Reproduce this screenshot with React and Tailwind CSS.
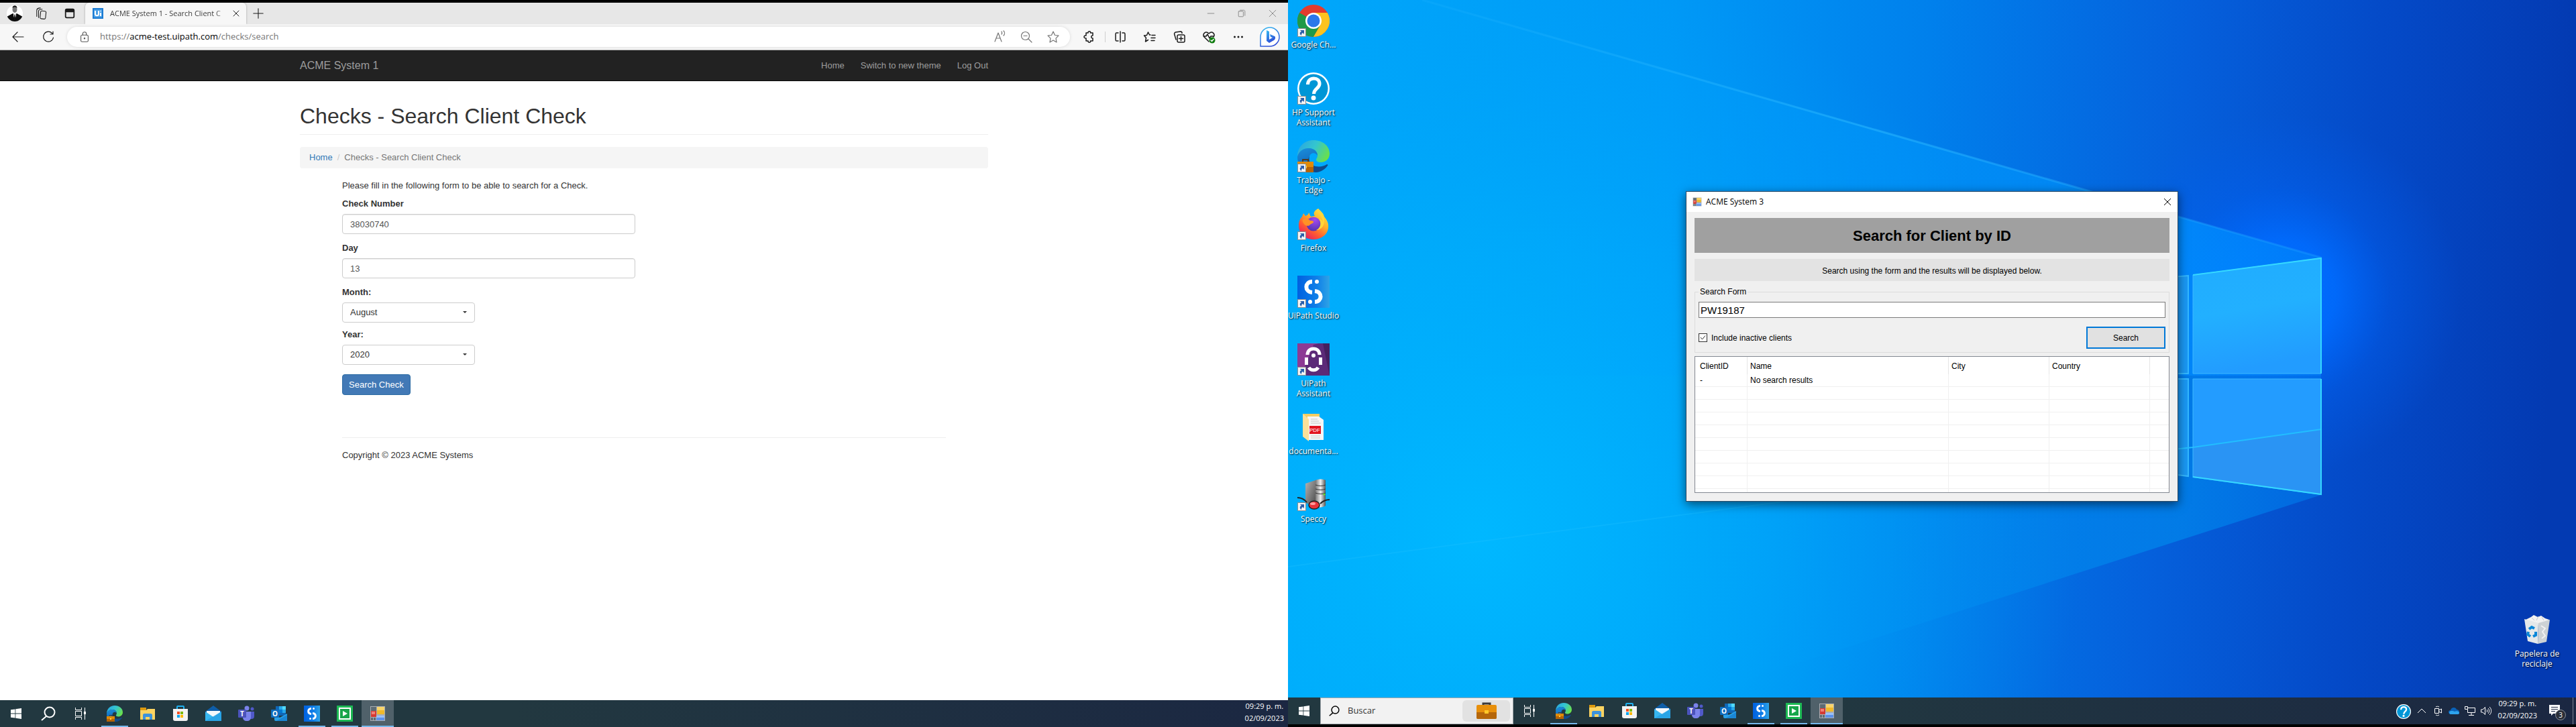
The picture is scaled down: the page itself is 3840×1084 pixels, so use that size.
import React from "react";

const SEGOE = "font-['Open_Sans','Noto_Sans',sans-serif]";
const ARIAL = "font-['Liberation_Sans',Arial,sans-serif]";

/* ---------- application icons ---------- */

function EdgeSwirl({ id }) {
  return (
    <>
      <defs>
        <linearGradient id={id + "a"} x1="0" y1="0.2" x2="1" y2="0.6">
          <stop offset="0" stopColor="#2aa6e0" />
          <stop offset="0.5" stopColor="#34c6cf" />
          <stop offset="1" stopColor="#6ae04a" />
        </linearGradient>
        <linearGradient id={id + "b"} x1="0" y1="0" x2="0.3" y2="1">
          <stop offset="0" stopColor="#1b8fdc" />
          <stop offset="1" stopColor="#0f5fb4" />
        </linearGradient>
      </defs>
      <path d="M0 25C0 10 10 0 24 0c14 0 24 9 24 20 0 8-6 13-13 13-5 0-7-2-7-4 0-2 2-3 2-6 0-6-5-11-13-11C9 12 2 17 0 25z" fill={`url(#${id}a)`} />
      <path d="M0 25c2-9 9-13 17-13 8 0 13 5 13 11-3-5-10-5-12 1-3 10 4 20 14 23-3 1-5 1-8 1C10 48 0 38 0 25z" fill={`url(#${id}b)`} />
      <path d="M18 24c-2 7 2 13 9 15 7 1 12 0 17-3 1 0 2 1 1 2-4 6-11 10-18 10C18 45 12 33 18 24z" fill="#114a8b" />
    </>
  );
}

function EdgeWork({ id, className }) {
  return (
    <svg viewBox="0 0 48 48" className={className} aria-hidden="true">
      <EdgeSwirl id={id} />
      <path d="M8 32v-3h8v3" fill="none" stroke="#4a3a2a" strokeWidth="2" />
      <rect x="0" y="32" width="24" height="16" fill="#e08a06" />
      <rect x="0" y="40" width="24" height="8" fill="#b56305" />
      <rect x="10" y="38" width="4" height="4" fill="#ffd24d" />
    </svg>
  );
}

function UiStudio({ id, className }) {
  return (
    <svg viewBox="0 0 48 48" className={className} aria-hidden="true">
      <defs>
        <linearGradient id={id} x1="0" y1="0" x2="1" y2="0">
          <stop offset="0" stopColor="#0060e0" />
          <stop offset="0.6" stopColor="#0f7fe8" />
          <stop offset="1" stopColor="#2ea3e6" />
        </linearGradient>
      </defs>
      <rect width="48" height="48" fill={`url(#${id})`} />
      <path d="M22 9C11 9 10 24 22 25" fill="none" stroke="#fff" strokeWidth="6" />
      <path d="M26 23C38 24 37 39 26 39" fill="none" stroke="#fff" strokeWidth="6" />
      <circle cx="29" cy="9" r="3" fill="#fff" />
      <circle cx="19" cy="39" r="3" fill="#fff" />
    </svg>
  );
}

function UiAssistant({ className }) {
  return (
    <svg viewBox="0 0 48 48" className={className} aria-hidden="true">
      <rect width="48" height="48" fill="#8d3a94" />
      <path d="M24 2L6 48h42V22L40 0h-8z" fill="#5c2a78" />
      <path d="M38 0h10v48z" fill="#44205f" />
      <path d="M15 17c0-6 4-9 9-9s9 3 9 9" fill="none" stroke="#fff" strokeWidth="5" />
      <path d="M13.500 21v11M34.500 21v11" fill="none" stroke="#fff" strokeWidth="5" />
      <path d="M17 36c3 5 11 5 14 0" fill="none" stroke="#fff" strokeWidth="5" />
      <circle cx="24" cy="18" r="3" fill="#fff" />
    </svg>
  );
}

function ChromeIcon({ className }) {
  return (
    <svg viewBox="0 0 48 48" className={className} aria-hidden="true">
      <circle cx="24" cy="24" r="24" fill="#e33b2e" />
      <path d="M24 24L3.200 12A24 24 0 0 0 24 48l10.400-18z" fill="#1f9a48" />
      <path d="M24 12h20.800A24 24 0 0 1 24 48l10.400-18z" fill="#fcc31e" />
      <circle cx="24" cy="24" r="12" fill="#fff" />
      <circle cx="24" cy="24" r="9.500" fill="#2b78ea" />
    </svg>
  );
}

function HpIcon({ className }) {
  return (
    <svg viewBox="0 0 48 48" className={className} aria-hidden="true">
      <circle cx="24" cy="24" r="24" fill="#fff" />
      <circle cx="24" cy="24" r="21.500" fill="#0096d6" />
      <path d="M15.500 18c0-6 4-9 9-9s8.500 3 8.500 8c0 7-8.500 7-8.500 15" fill="none" stroke="#fff" strokeWidth="5" />
      <circle cx="24" cy="38" r="3.500" fill="#fff" />
    </svg>
  );
}

function FirefoxIcon({ className }) {
  return (
    <svg viewBox="0 0 48 48" className={className} aria-hidden="true">
      <defs>
        <linearGradient id="ffx" x1="0.9" y1="0" x2="0.2" y2="1">
          <stop offset="0" stopColor="#fff24a" />
          <stop offset="0.4" stopColor="#ffb02a" />
          <stop offset="0.7" stopColor="#ff5a32" />
          <stop offset="1" stopColor="#e4156a" />
        </linearGradient>
        <radialGradient id="ffg" cx="0.6" cy="0.2" r="0.9">
          <stop offset="0" stopColor="#a54af0" />
          <stop offset="1" stopColor="#4a30a8" />
        </radialGradient>
      </defs>
      <path d="M31 1c4 4 8 7 9 12 4 5 7 10 6 17-1 10-11 17-22 17C11 47 2 38 2 26c0-6 2-10 5-13l2-5 3 4c3-1 5-3 5-5 2 2 1 5 4 6 2-1 3-1 5-1-3-4-1-8 5-11z" fill="url(#ffx)" />
      <circle cx="24" cy="24" r="10.500" fill="url(#ffg)" />
      <path d="M8 17c4-2 9-1 11 2 2 0 5 0 5 2 0 2-3 2-5 4-2 3-7 2-9-1-2-2-3-5-2-7z" fill="#ff9226" />
      <path d="M31 1c-1 6 7 12 7 20-1-2-3-4-5-4 3 5 2 13-5 16 8 0 13-7 12-16 0-6-6-9-9-16z" fill="#ffd63a" />
    </svg>
  );
}

function DocFolder({ className }) {
  return (
    <svg viewBox="0 0 48 48" className={className} aria-hidden="true">
      <path d="M8 4h25v8H8z" fill="#f3cd62" />
      <path d="M15 8h17l7 5v30H15z" fill="#f6f6f6" />
      <path d="M20 12h10M20 15h12M20 18h15M20 37h14M20 40h14" stroke="#c8c8c8" />
      <path d="M8 4l9 8v33l-9-7z" fill="#fbe09a" />
      <rect x="18" y="22" width="17" height="12" fill="#e2131f" />
      <text x="26" y="31" fontSize="8" textAnchor="middle" fill="#fff" fontFamily="Liberation Sans, sans-serif">PDF</text>
    </svg>
  );
}

function SpeccyIcon({ className }) {
  return (
    <svg viewBox="0 0 48 48" className={className} aria-hidden="true">
      <defs>
        <linearGradient id="spc" x1="0" x2="1" y1="0" y2="0">
          <stop offset="0" stopColor="#777" />
          <stop offset="0.5" stopColor="#eee" />
          <stop offset="1" stopColor="#555" />
        </linearGradient>
        <linearGradient id="spl" x1="0" x2="1" y1="0" y2="1">
          <stop offset="0" stopColor="#b4b4b4" />
          <stop offset="1" stopColor="#4c4c4c" />
        </linearGradient>
      </defs>
      <path d="M12 7l15-5v38l-15-4z" fill="url(#spl)" />
      <path d="M27 2c5-2 11-2 15 0v38c-4 3-10 3-15 1z" fill="url(#spc)" />
      <path d="M27 9c5 2 11 2 15 0M27 15c5 2 11 2 15 0M27 21c5 2 11 2 15 0" stroke="#333" fill="none" strokeWidth="1" />
      <circle cx="40" cy="23" r="1.500" fill="#5ee02c" />
      <path d="M0 28c6 0 10 2 14 7M48 31c-6 0-10 2-14 6" stroke="#222" strokeWidth="2" fill="none" />
      <ellipse cx="25" cy="39" rx="8" ry="6" fill="#e8333a" stroke="#222" strokeWidth="1.500" />
      <ellipse cx="23" cy="37" rx="4" ry="2" fill="#ff9a9a" />
    </svg>
  );
}

function RecycleBin({ className }) {
  return (
    <svg viewBox="0 0 48 48" className={className} aria-hidden="true">
      <path d="M7 9l8-4 4-3 6 3 5-2 6 4 6 2-3 5-18 3z" fill="#f2f2f2" />
      <path d="M16 6l4 4M26 4l-3 6M31 5l3 5" stroke="#c5c9cc" />
      <path d="M5 8l21 6-1 31-15-4z" fill="#e4e8ea" />
      <path d="M26 14l17-5-5 33-13 3z" fill="#cdd2d5" />
      <path d="M30 18l6 4-4 5 4 6-5 4" fill="none" stroke="#f2f2f2" strokeWidth="2" />
      <path d="M12 23l4-3 4 2M22 27l0 5-4 2M14 34l-4-3 1-4" stroke="#0a86d8" strokeWidth="4" fill="none" />
    </svg>
  );
}

function FormsIcon({ className }) {
  return (
    <svg viewBox="0 0 24 24" className={className} aria-hidden="true">
      <path d="M1 1h22v22H1z" fill="#a9adb2" />
      <path d="M2 2h8v6H2zM2 18h3v4H2zM6 18h3v4H6z" fill="#5d6b73" />
      <rect x="11" y="2" width="11" height="11" fill="#f0b92a" />
      <path d="M11 2h11v5H11z" fill="#f8d469" />
      <rect x="2" y="8" width="8" height="9" fill="#d43a32" />
      <path d="M3 9h5v4H3z" fill="#ee8077" />
      <rect x="10" y="15" width="12" height="7" fill="#5b91ea" />
      <path d="M10 15h12v3H10z" fill="#9bc0f8" />
    </svg>
  );
}

function ExplorerIcon() {
  return (
    <svg viewBox="0 0 24 24" className="size-6" aria-hidden="true">
      <path d="M1 3h9v5H1z" fill="#dd9a0e" />
      <path d="M1 7h9l2-2h11v16H1z" fill="#fcd462" />
      <path d="M5 21v-7c0-1 1-2 2-2h10c1 0 2 1 2 2v7h-4v-4H9v4z" fill="#3d93dc" />
    </svg>
  );
}

function StoreIcon() {
  return (
    <svg viewBox="0 0 24 24" className="size-6" aria-hidden="true">
      <path d="M7 6V2c0-1 0-1 1-1h8c1 0 1 0 1 1v4" fill="none" stroke="#20b2f0" strokeWidth="2" />
      <path d="M1 5h22v15c0 2-1 3-3 3H4c-2 0-3-1-3-3z" fill="#f3f3f3" />
      <path d="M7 9h4v4H7z" fill="#f25022" />
      <path d="M12 9h4v4h-4z" fill="#7fba00" />
      <path d="M7 14h4v4H7z" fill="#00a4ef" />
      <path d="M12 14h4v4h-4z" fill="#ffb900" />
    </svg>
  );
}

function MailIcon() {
  return (
    <svg viewBox="0 0 24 24" className="size-6" aria-hidden="true">
      <path d="M0 9l12-9 12 9v3H0z" fill="#0f5ea8" />
      <path d="M2 8h20v9H2z" fill="#f4f8fb" />
      <path d="M0 9l12 8 12-8v14H0z" fill="#37b6f0" />
      <path d="M24 9v14H0z" fill="#1f97e0" opacity="0.6" />
    </svg>
  );
}

function TeamsIcon() {
  return (
    <svg viewBox="0 0 24 24" className="size-6" aria-hidden="true">
      <circle cx="13" cy="4" r="3.500" fill="#7b83eb" />
      <circle cx="21" cy="5" r="2.500" fill="#5059c9" />
      <path d="M17 9h7v7c0 3-2 4-4 4h-3z" fill="#5059c9" />
      <path d="M7 9h12v8c0 4-2 6-6 6s-6-2-6-6z" fill="#7b83eb" />
      <rect x="0" y="6" width="12" height="12" rx="1" fill="#4b53bc" />
      <text x="6" y="16" fontSize="10" fontWeight="bold" textAnchor="middle" fill="#fff" fontFamily="Open Sans, sans-serif">T</text>
    </svg>
  );
}

function OutlookIcon() {
  return (
    <svg viewBox="0 0 24 24" className="size-6" aria-hidden="true">
      <rect x="7" y="1" width="15" height="14" fill="#1066b5" />
      <path d="M12 1h5v5h-5z" fill="#28a8ea" />
      <path d="M17 1h5v5h-5z" fill="#50d9ff" />
      <path d="M12 6h5v5h-5z" fill="#0078d4" />
      <path d="M17 6h5v5h-5z" fill="#28a8ea" />
      <path d="M5 14l8 4 11-6v11H7c-1 0-2-1-2-2z" fill="#2aa0e6" />
      <path d="M24 23H8l16-9z" fill="#1a86d4" />
      <rect x="0" y="6" width="12" height="12" rx="1" fill="#0f6cbd" />
      <text x="6" y="16" fontSize="10" fontWeight="bold" textAnchor="middle" fill="#fff" fontFamily="Open Sans, sans-serif">O</text>
    </svg>
  );
}

function RobotIcon() {
  return (
    <svg viewBox="0 0 24 24" className="size-6" aria-hidden="true">
      <rect width="24" height="24" fill="#1db954" />
      <path d="M4 4h16v16H4z" fill="#17a54a" stroke="#fff" strokeWidth="2" />
      <path d="M9 8l7 4-7 4z" fill="#fff" />
    </svg>
  );
}

function TaskViewIcon() {
  return (
    <svg viewBox="0 0 18 18" className="size-[18px]" fill="none" stroke="#fff" aria-hidden="true">
      <path d="M1.500 0v3.500h9V0M1.500 18v-3.500h9V18M1.500 5.500h9v7h-9zM15.500 0v18" />
      <path d="M14 6h3v4h-3z" fill="#fff" stroke="none" />
    </svg>
  );
}

function StartIcon() {
  return (
    <svg viewBox="0 0 16 16" className="size-4" fill="#fff" aria-hidden="true">
      <path d="M0 2.300l6.500-.9v6.200H0zM7.300 1.300L16 0v7.600H7.300zM0 8.400h6.500v6.200L0 13.700zM7.300 8.400H16V16l-8.700-1.200z" />
    </svg>
  );
}

function Magnifier({ className }) {
  return (
    <svg viewBox="0 0 22 22" className={className} fill="none" stroke="currentColor" strokeWidth="2" aria-hidden="true">
      <circle cx="13" cy="9" r="7.500" />
      <path d="M8 15l-7 6" />
    </svg>
  );
}

function Briefcase() {
  return (
    <svg viewBox="0 0 32 26" className="h-[26px] w-8" aria-hidden="true">
      <path d="M11 5V2h10v3" fill="none" stroke="#3d3a3a" strokeWidth="3" />
      <rect x="1" y="4" width="30" height="21" rx="2" fill="#e8900c" />
      <path d="M1 15h30v8c0 1-1 2-2 2H3c-1 0-2-1-2-2z" fill="#b5660a" />
      <rect x="13" y="12" width="6" height="5" fill="#ffc928" />
    </svg>
  );
}

/* ---------- taskbar ---------- */

function TaskButton({ label, running, active, children }) {
  return (
    <button
      type="button"
      aria-label={label}
      className={
        "flex h-10 w-12 flex-col items-center " + (active ? "bg-[#50616a]" : "")
      }
    >
      <span className="flex h-[38px] items-center pt-0.5">{children}</span>
      <span className={"h-0.5 " + (active ? "w-full " : "w-10 ") + (running ? "bg-[#76b9ed]" : "")} />
    </button>
  );
}

function PinnedApps({ id }) {
  return (
    <div className="ml-[3px] flex gap-px">
      <TaskButton label="Edge" running><EdgeWork id={id + "e"} className="size-6" /></TaskButton>
      <TaskButton label="Explorador de archivos"><ExplorerIcon /></TaskButton>
      <TaskButton label="Microsoft Store"><StoreIcon /></TaskButton>
      <TaskButton label="Correo"><MailIcon /></TaskButton>
      <TaskButton label="Teams"><TeamsIcon /></TaskButton>
      <TaskButton label="Outlook"><OutlookIcon /></TaskButton>
      <TaskButton label="UiPath Studio" running><UiStudio id={id + "u"} className="size-6" /></TaskButton>
      <TaskButton label="UiPath Robot" running><RobotIcon /></TaskButton>
      <TaskButton label="ACME System 3" running active><FormsIcon className="size-6" /></TaskButton>
    </div>
  );
}

function Clock() {
  return (
    <div className="text-center text-[11px] leading-[18px] whitespace-nowrap text-white">
      <div>09:29 p. m.</div>
      <div>02/09/2023</div>
    </div>
  );
}

const BAR = "flex h-10 shrink-0 items-stretch bg-linear-to-r from-[#223840] from-40% to-[#1b2742] ";

/* ---------- browser ---------- */

function Stroke({ className, children, w = 20 }) {
  return (
    <svg viewBox="0 0 20 20" width={w} height={w} className={className} fill="none" stroke="currentColor" strokeWidth="1.200" strokeLinejoin="round" strokeLinecap="round" aria-hidden="true">
      {children}
    </svg>
  );
}

function ToolButton({ label, children, className = "w-11" }) {
  return (
    <button type="button" aria-label={label} className={"flex items-center justify-center " + className}>
      {children}
    </button>
  );
}

function TabStrip() {
  return (
    <div className="flex h-8 items-center bg-[#e7e7e7] text-[#1b1b1b]">
      <button type="button" aria-label="Perfil" className="ml-2.5 overflow-hidden rounded-full bg-white">
        <svg viewBox="0 0 24 24" className="size-6" aria-hidden="true">
          <ellipse cx="12" cy="6" rx="3.500" ry="5" fill="#777" />
          <path d="M8.500 4c0-5 7-5 7 0-2-2-5-2-7 0z" fill="#111" />
          <path d="M0 17l9-5 3 2 3-2 9 5v7H0z" fill="#0c0c0c" />
          <path d="M10 12l2 2 2-2v3l-2 7-2-7z" fill="#ddd" />
          <path d="M11.500 14h1l.8 7-1.300 2-1.300-2z" fill="#111" />
        </svg>
      </button>
      <ToolButton label="Áreas de trabajo" className="ml-3.5 w-7">
        <Stroke w={18}>
          <rect x="8" y="6" width="9" height="13" rx="2" transform="rotate(6 12 12)" />
          <path d="M5 17V6c0-2 2-3 6-3M2 15V5c0-2 2-4 6-4" />
        </Stroke>
      </ToolButton>
      <ToolButton label="Acciones de pestaña" className="ml-3.5 w-7">
        <Stroke w={18} className="stroke-2">
          <rect x="3" y="3" width="14" height="14" rx="2" />
          <path d="M4 4h12v3H4z" fill="currentColor" />
        </Stroke>
      </ToolButton>
      <div className="ml-[9px] flex h-8 w-60 items-center rounded-t-md bg-[#f7f7f7] pl-[11px] shadow-[0_0_3px_rgba(0,0,0,0.3)]">
        <svg viewBox="0 0 16 16" className="size-4" aria-hidden="true">
          <path d="M1 1h14v14H1z" fill="#4a9fe6" stroke="#1c7bd2" strokeWidth="2" />
          <path d="M4 4v5c0 3 5 3 5 0V4M12 7v5M12 4v1" fill="none" stroke="#fff" strokeWidth="2" />
        </svg>
        <span className="ml-2.5 w-[174px] mask-r-from-90% text-[11px] whitespace-nowrap text-[#3b3b3b]">ACME System 1 - Search Client C</span>
        <ToolButton label="Cerrar pestaña" className="ml-1.5 w-4">
          <Stroke w={16}><path d="M5 5l10 10M15 5L5 15" /></Stroke>
        </ToolButton>
      </div>
      <ToolButton label="Nueva pestaña" className="ml-2 w-5">
        <Stroke w={18}><path d="M10 2v16M2 10h16" /></Stroke>
      </ToolButton>
      <div className="ml-auto flex text-[#8a8a8a]">
        <ToolButton label="Minimizar" className="w-[46px]"><Stroke w={16}><path d="M4 10h12" /></Stroke></ToolButton>
        <ToolButton label="Restaurar" className="w-[46px]">
          <Stroke w={16}><rect x="4" y="6" width="9" height="10" rx="1" /><path d="M7 4h7c1 0 2 1 2 2v8" /></Stroke>
        </ToolButton>
        <ToolButton label="Cerrar" className="w-[46px]"><Stroke w={16}><path d="M4 4l12 12M16 4L4 16" /></Stroke></ToolButton>
      </div>
    </div>
  );
}

function AddressBar() {
  return (
    <div className="flex h-[39px] items-center border-b border-[#b5b5b5] bg-[#f7f7f7] pr-3 text-[#1b1b1b]">
      <ToolButton label="Atrás" className="ml-[5px] w-11">
        <Stroke><path d="M18 10H2M9 3l-7 7 7 7" /></Stroke>
      </ToolButton>
      <ToolButton label="Actualizar" className="ml-px w-11">
        <Stroke><path d="M17.500 11A7.500 7.500 0 1 1 16 5M17 2v4h-4" /></Stroke>
      </ToolButton>
      <div className="ml-1.5 flex h-[30px] flex-1 items-center rounded-full bg-white pl-[17px] shadow-[0_0_5px_rgba(0,0,0,0.12)]">
        <Stroke className="text-[#555]" w={18}>
          <rect x="4" y="7" width="12" height="11" rx="2" />
          <path d="M7 7V5c0-4 6-4 6 0v2" />
          <circle cx="10" cy="12.500" r="0.800" fill="currentColor" />
        </Stroke>
        <p className="ml-3.5 flex-1 text-[13px] text-[#767676]">
          https://<span className="text-black">acme-test.uipath.com</span>/checks/search
        </p>
        <div className="mr-[5px] flex text-[#757575]">
          <ToolButton label="Leer en voz alta" className="w-10">
            <Stroke><path d="M3 17L8 4l5 13M5 12h6M13 6c1-1 1-2 0-4M16 8c2-2 2-5 0-7" /></Stroke>
          </ToolButton>
          <ToolButton label="Zoom" className="w-10">
            <Stroke><circle cx="8.500" cy="8.500" r="6" /><path d="M13 13l5 5M6 8.500h5" /></Stroke>
          </ToolButton>
          <ToolButton label="Agregar a favoritos" className="w-10">
            <Stroke><path d="M10 2l2.500 5.500 5.500.7-4 4 1 5.800-5-3-5 3 1-5.800-4-4 5.500-.7z" /></Stroke>
          </ToolButton>
        </div>
      </div>
      <div className="flex items-center">
        <ToolButton label="Extensiones" className="w-[52px] pl-1">
          <Stroke className="stroke-[1.500]"><path d="M16 4h-3.500c1-3-4-3-3.500 0H6v4c-4-.8-4 4.500 0 4v4h3c-.5 3 4.500 3 3.500 0H16v-4c-3 .5-3-4.500 0-4z" /></Stroke>
        </ToolButton>
        <span className="h-4 w-px bg-[#cfcfcf]" />
        <ToolButton label="Pantalla dividida">
          <Stroke className="stroke-[1.500]"><path d="M10 2v16M7 4H4c-1 0-1 1-1 2v8c0 1 0 2 1 2h3M13 4h3c1 0 1 1 1 2v8c0 1 0 2-1 2h-3" /></Stroke>
        </ToolButton>
        <ToolButton label="Favoritos">
          <Stroke className="stroke-[1.500]"><path d="M11 7H9.500L7.500 3 5.500 7.500 1.500 8l3 3.500-1 5.500 4-2.500M13 7.500h5M12 11.500h6M12 15.500h5" /></Stroke>
        </ToolButton>
        <ToolButton label="Colecciones">
          <Stroke className="stroke-[1.500]"><rect x="7" y="7" width="11" height="11" rx="2" /><path d="M12.500 9.500v6M9.500 12.500h6M5 14L2.500 5.500c0-2 1-2 2-2.500L12 2c1 0 2 1 2 2.500" /></Stroke>
        </ToolButton>
        <ToolButton label="Rendimiento">
          <Stroke className="stroke-[1.500]">
            <path d="M10 17L3 10C0 6 5 0 10 5c5-5 10 1 7 5M2 9h4l2-3 3 6 2-3h4" />
            <circle cx="15" cy="15" r="4.500" fill="#107c10" stroke="none" />
            <path d="M13 15l1.500 1.500L17 13.500" stroke="#fff" />
          </Stroke>
        </ToolButton>
        <ToolButton label="Más">
          <Stroke><g fill="currentColor" stroke="none"><circle cx="4.500" cy="10" r="1.500" /><circle cx="10" cy="10" r="1.500" /><circle cx="15.500" cy="10" r="1.500" /></g></Stroke>
        </ToolButton>
        <ToolButton label="Bing" className="ml-2.5 w-[30px]">
          <svg viewBox="0 0 30 30" className="size-[30px]" aria-hidden="true">
            <defs>
              <linearGradient id="bing" x1="0" y1="0" x2="0.4" y2="1">
                <stop offset="0" stopColor="#35bdf2" />
                <stop offset="1" stopColor="#2d4fd8" />
              </linearGradient>
            </defs>
            <path d="M1 29V15A14 14 0 1 1 15 29z" fill="#fff" stroke="url(#bing)" strokeWidth="1.500" />
            <path d="M10 5l4 2v12l5-3-3-1-1-4 7 3c2 1 1 5-1 6l-7 4-4-3z" fill="url(#bing)" />
          </svg>
        </ToolButton>
      </div>
    </div>
  );
}

function TextField({ id, label, value }) {
  return (
    <div className="mb-3">
      <label htmlFor={id} className="mb-1.5 block font-bold">{label}</label>
      <input
        id={id}
        type="text"
        defaultValue={value}
        className="block h-[30px] w-[437px] rounded border border-[#ccc] bg-white px-[11px] text-[#555] shadow-[inset_0_1px_1px_rgba(0,0,0,0.08)]"
      />
    </div>
  );
}

function SelectField({ id, label, value, options }) {
  return (
    <div className="mb-[9px]">
      <label htmlFor={id} className="mb-1.5 block font-bold">{label}</label>
      <div className="relative w-[198px]">
        <select id={id} defaultValue={value} className="block h-[30px] w-full appearance-none rounded border border-[#ccc] bg-white px-[11px] text-[#333]">
          {options.map((o) => <option key={o}>{o}</option>)}
        </select>
        <span className="pointer-events-none absolute top-[13px] right-3 border-x-3 border-t-3 border-x-transparent border-t-[#333]" />
      </div>
    </div>
  );
}

function AcmePage() {
  return (
    <div className={"flex-1 bg-white text-[13px] leading-[18px] text-[#333] " + ARIAL}>
      <header className="h-[46px] border-b border-[#080808] bg-[#222]">
        <div className="mx-auto flex h-full w-[1026px] items-center justify-between text-[#9d9d9d]">
          <a href="#home" className="text-[16px]">ACME System 1</a>
          <nav className="flex gap-6">
            <a href="#home">Home</a>
            <a href="#theme">Switch to new theme</a>
            <a href="#logout">Log Out</a>
          </nav>
        </div>
      </header>
      <main className="mx-auto w-[1026px] pt-[34px]">
        <h1 className="border-b border-[#eee] pb-[9px] text-[32px] leading-9">Checks - Search Client Check</h1>
        <ol className="mt-[18px] flex h-8 items-center rounded bg-[#f5f5f5] px-3.5">
          <li><a href="#home" className="text-[#337ab7]">Home</a></li>
          <li className="px-[7px] text-[#ccc]">/</li>
          <li className="text-[#777]">Checks - Search Client Check</li>
        </ol>
        <form className="mx-[63px] mt-[17px]" onSubmit={(e) => e.preventDefault()}>
          <p className="mb-[9px]">Please fill in the following form to be able to search for a Check.</p>
          <TextField id="check" label="Check Number" value="38030740" />
          <TextField id="day" label="Day" value="13" />
          <SelectField id="month" label="Month:" value="August" options={["July", "August", "September"]} />
          <SelectField id="year" label="Year:" value="2020" options={["2019", "2020", "2021"]} />
          <button type="submit" className="mt-[5px] h-[31px] rounded border border-[#2e6da4] bg-[#4279b6] px-[9px] text-white">Search Check</button>
        </form>
        <footer className="mx-[63px] mt-[63px] border-t border-[#eee] pt-[17px]">Copyright © 2023 ACME Systems</footer>
      </main>
    </div>
  );
}

function LeftScreen() {
  return (
    <section className="flex min-h-screen flex-col bg-white pt-1 shadow-[inset_0_4px_0_#000]">
      <TabStrip />
      <AddressBar />
      <AcmePage />
      <div className={BAR}>
        <TaskButton label="Inicio"><StartIcon /></TaskButton>
        <TaskButton label="Buscar"><Magnifier className="size-[22px] text-white" /></TaskButton>
        <TaskButton label="Vista de tareas"><TaskViewIcon /></TaskButton>
        <PinnedApps id="l" />
        <div className="mr-1.5 ml-auto"><Clock /></div>
      </div>
    </section>
  );
}

/* ---------- desktop ---------- */

function Wallpaper() {
  return (
    <svg viewBox="0 0 1920 1040" preserveAspectRatio="none" className="absolute inset-0 size-full" aria-hidden="true">
      <defs>
        <linearGradient id="wbase" x1="0" y1="0" x2="1" y2="0.04">
          <stop offset="0" stopColor="#00a8fb" />
          <stop offset="0.3" stopColor="#0098f6" />
          <stop offset="0.5" stopColor="#0080ec" />
          <stop offset="0.7" stopColor="#0560dc" />
          <stop offset="0.85" stopColor="#044ac8" />
          <stop offset="1" stopColor="#033ab2" />
        </linearGradient>
        <radialGradient id="wcyan" gradientUnits="userSpaceOnUse" cx="280" cy="800" r="900">
          <stop offset="0" stopColor="#00b8ff" />
          <stop offset="0.5" stopColor="#00b0fc" stopOpacity="0.6" />
          <stop offset="1" stopColor="#00a0f8" stopOpacity="0" />
        </radialGradient>
        <radialGradient id="wglow" gradientUnits="userSpaceOnUse" cx="1480" cy="440" r="270">
          <stop offset="0" stopColor="#0070ff" />
          <stop offset="0.3" stopColor="#006cff" stopOpacity="0.9" />
          <stop offset="0.6" stopColor="#0064f8" stopOpacity="0.35" />
          <stop offset="1" stopColor="#0060f0" stopOpacity="0" />
        </radialGradient>
        <linearGradient id="wbeam" gradientUnits="userSpaceOnUse" x1="200" y1="0" x2="1540" y2="0">
          <stop offset="0" stopColor="#00a8ff" stopOpacity="0" />
          <stop offset="0.6" stopColor="#009cff" stopOpacity="0.5" />
          <stop offset="0.85" stopColor="#0090ff" stopOpacity="0.8" />
          <stop offset="1" stopColor="#0080f8" stopOpacity="0.7" />
        </linearGradient>
        <linearGradient id="wlow" gradientUnits="userSpaceOnUse" x1="500" y1="0" x2="1540" y2="0">
          <stop offset="0" stopColor="#00a8ff" stopOpacity="0" />
          <stop offset="0.5" stopColor="#0098f4" stopOpacity="0.3" />
          <stop offset="0.8" stopColor="#0088ec" stopOpacity="0.7" />
          <stop offset="1" stopColor="#0078ec" stopOpacity="0.6" />
        </linearGradient>
        <linearGradient id="wline" gradientUnits="userSpaceOnUse" x1="200" y1="0" x2="1540" y2="0">
          <stop offset="0" stopColor="#2ab8ff" stopOpacity="0.15" />
          <stop offset="0.5" stopColor="#2ab8ff" stopOpacity="0.55" />
          <stop offset="1" stopColor="#1a9cff" stopOpacity="0.4" />
        </linearGradient>
        <linearGradient id="wpane" x1="0" y1="0" x2="0.2" y2="1">
          <stop offset="0" stopColor="#20acff" />
          <stop offset="0.5" stopColor="#22b0ff" />
          <stop offset="1" stopColor="#229cff" />
        </linearGradient>
      </defs>
      <rect width="1920" height="1040" fill="url(#wbase)" />
      <rect width="1920" height="1040" fill="url(#wcyan)" />
      <rect width="1920" height="1040" fill="url(#wglow)" />
      <path d="M200 0L1540 384V560H200z" fill="url(#wbeam)" />
      <path d="M200 560H1540V738L600 1040H200z" fill="url(#wlow)" />
      <path d="M200 0L1540 384" stroke="url(#wline)" strokeWidth="3" />
      <path d="M0 845L760 745" stroke="#22c4ff" strokeOpacity="0.25" strokeWidth="2" />
      <path d="M1100 430L1342 411V557H1100zM1100 565H1342V710L1100 680z" fill="#1a98f4" stroke="#34b8ff" strokeWidth="2" />
      <path d="M1349 410L1541 384V557H1349z" fill="url(#wpane)" />
      <path d="M1349 565H1541V738L1349 712z" fill="#239cff" />
      <path d="M1349 667L1541 640V738L1349 712z" fill="#2a94f4" />
      <path d="M1320 670L1349 667L1541 640" stroke="#22beff" strokeWidth="2" fill="none" />
      <path d="M1349 557V410L1540 385M1349 565H1540M1349 557H1540M1349 565V712" fill="none" stroke="#3cb8ff" strokeWidth="1" />
      <path d="M1349 410L1540 385V557M1540 565V737L1349 711" fill="none" stroke="#35d8ff" strokeWidth="2" />
    </svg>
  );
}

function ShortcutArrow() {
  return (
    <svg viewBox="0 0 13 13" className="absolute bottom-0 left-0 size-[13px]" aria-hidden="true">
      <path d="M.5.5h12v12H.5z" fill="#f4f4f4" stroke="#8d8d8d" />
      <path d="M4 3h6v6L8 7c-2 1-2 2-2 4-3-2-3-5 0-6z" fill="#2b5faa" />
    </svg>
  );
}

function DesktopIcon({ label, shortcut = true, children }) {
  return (
    <a href="#open" className="flex h-[101px] w-[76px] flex-col items-center pt-[7px]">
      <span className="relative">
        {children}
        {shortcut && <ShortcutArrow />}
      </span>
      <span className="mt-1 text-center text-[12px] leading-[15px] whitespace-nowrap text-white [text-shadow:1px_1px_2px_#000]">{label}</span>
    </a>
  );
}

function ResultsTable() {
  const blanks = [0, 1, 2, 3, 4, 5, 6, 7];
  const line = "border-r border-b border-[#f0f0f0] px-1 first:pl-[7px]";
  return (
    <div className="mt-[5px] h-[204px] overflow-hidden border border-[#828790] bg-white">
      <table className="w-full table-fixed border-separate border-spacing-0 text-left">
        <colgroup>
          <col className="w-[78px]" />
          <col className="w-[300px]" />
          <col className="w-[150px]" />
          <col className="w-[150px]" />
          <col />
        </colgroup>
        <thead>
          <tr className="h-[26px]">
            {["ClientID", "Name", "City", "Country"].map((h) => (
              <th key={h} className="border-r border-[#e5e5e5] px-1 pt-0.5 font-normal first:pl-[7px]">{h}</th>
            ))}
            <td />
          </tr>
        </thead>
        <tbody>
          <tr className="h-[19px] leading-[18px]">
            <td className={line}>-</td>
            <td className={line}>No search results</td>
            <td className={line} />
            <td className={line} />
            <td className="border-b border-[#f0f0f0]" />
          </tr>
          {blanks.map((i) => (
            <tr key={i} className="h-[19px]">
              <td className={line} /><td className={line} /><td className={line} /><td className={line} />
              <td className="border-b border-[#f0f0f0]" />
            </tr>
          ))}
          <tr className="h-[19px]">
            <td className={line} /><td className={line} /><td className={line} /><td className={line} />
            <td />
          </tr>
        </tbody>
      </table>
    </div>
  );
}

function AcmeDialog() {
  return (
    <div role="dialog" aria-label="ACME System 3" className={"absolute top-[285px] left-[593px] w-[734px] border border-[#2a4a66] bg-[#f0f0f0] pb-3 text-[12px] text-black shadow-[0_4px_14px_rgba(0,0,0,0.55)] " + ARIAL}>
      <div className={"flex h-[30px] items-center bg-white pl-[9px] text-[12px] " + SEGOE}>
        <FormsIcon className="size-3.5" />
        <span className="ml-1.5">ACME System 3</span>
        <button type="button" aria-label="Cerrar" className="mr-2.5 ml-auto">
          <svg viewBox="0 0 10 10" className="size-2.5" stroke="#000" aria-hidden="true"><path d="M0 0l10 10M10 0L0 10" /></svg>
        </button>
      </div>
      <div className="px-3 pt-[9px]">
        <h2 className="flex h-[52px] items-center justify-center bg-[#a0a0a0] text-[22px] font-bold">Search for Client by ID</h2>
        <p className="mt-[9px] flex h-[33px] items-center justify-center bg-[#e3e3e3] pt-0.5">Search using the form and the results will be displayed below.</p>
        <fieldset className="mt-2 border border-[#dcdcdc] px-[5px] pb-[5px]">
          <legend className="px-0.5 leading-4">Search Form</legend>
          <input aria-label="Client ID" type="text" defaultValue="PW19187" className="mt-[7px] block h-6 w-full border border-[#7a7a7a] bg-white px-0.5 text-[15px]" />
          <div className="mt-[13px] flex items-center justify-between">
            <label className="flex items-center gap-1.5">
              <span className="relative flex size-[13px]">
                <input type="checkbox" defaultChecked className="size-[13px] appearance-none border border-[#333] bg-white" />
                <svg viewBox="0 0 13 13" className="pointer-events-none absolute inset-0 size-[13px]" fill="none" stroke="#333" aria-hidden="true"><path d="M3 6l2.500 3L10 3.500" /></svg>
              </span>
              Include inactive clients
            </label>
            <button type="submit" className="h-[33px] w-[118px] border-2 border-[#0078d7] bg-[#e1e1e1]">Search</button>
          </div>
        </fieldset>
        <ResultsTable />
      </div>
    </div>
  );
}

function Tray() {
  return (
    <div className="ml-auto flex items-center text-white">
      <HpIcon className="mt-0.5 size-[22px]" />
      <svg viewBox="0 0 12 8" className="ml-2.5 h-2 w-3" fill="none" stroke="#fff" aria-hidden="true"><path d="M0 7l6-6 6 6" /></svg>
      <svg viewBox="0 0 16 16" className="ml-2.5 size-4" fill="none" stroke="#fff" aria-hidden="true">
        <path d="M3.500 4.500h6v7h-6zM9.500 7l4-2v6l-4-2M5 2c2-1 3-1 5 0M5 14c2 1 3 1 5 0" />
      </svg>
      <svg viewBox="0 0 16 12" className="ml-2 h-3 w-4" aria-hidden="true">
        <path d="M3 11c-4-1-4-6 0-6 1-5 8-5 9-1 5 0 5 6 2 7z" fill="#0a62b8" />
        <path d="M3 11C0 10 1 6 4 6c3 0 3 0 5 1 4-2 7 0 7 2 0 1-1 2-2 2z" fill="#2ea4ee" />
      </svg>
      <svg viewBox="0 0 16 14" className="ml-2 h-3.5 w-4" fill="none" stroke="#fff" aria-hidden="true">
        <path d="M5 2.500h10.500v7H4.500V5M.5.500h4v4h-4zM10 9.500V13M6 13.500h8" />
      </svg>
      <svg viewBox="0 0 16 14" className="ml-2 h-3.5 w-4" fill="none" stroke="#fff" aria-hidden="true">
        <path d="M.5 5v4H3l3.500 3.500v-11L3 5zM9 5c1 1 1 3 0 4M11 3c2 2 2 6 0 8M13 1c3.500 3 3.500 9 0 12" />
      </svg>
      <div className="ml-2.5 self-start"><Clock /></div>
      <button type="button" aria-label="Notificaciones" className="relative ml-[17px] h-6 w-[26px]">
        <svg viewBox="0 0 26 24" className="h-6 w-[26px]" aria-hidden="true">
          <path d="M1 3h16v13H7l-3 3v-3H1z" fill="#fff" />
          <path d="M4 6.500h10M4 9.500h10M4 12.500h6" stroke="#1b2742" />
        </svg>
        <span className="absolute right-0 bottom-[-2px] flex size-4 items-center justify-center rounded-full border border-[#8a8f99] bg-[#2b2f38] text-[10px] leading-none">3</span>
      </button>
      <span className="ml-2.5 h-full w-px bg-[#7a8294]" />
      <span className="w-1" />
    </div>
  );
}

function RightScreen() {
  return (
    <section className="flex min-h-screen flex-col bg-black pb-1">
      <div className="relative flex-1 overflow-hidden bg-[#0090f0]">
        <Wallpaper />
        <div className="relative flex h-full items-start justify-between">
          <div>
            <DesktopIcon label="Google Ch..."><ChromeIcon className="size-12" /></DesktopIcon>
            <DesktopIcon label={<>HP Support<br />Assistant</>}><HpIcon className="size-12" /></DesktopIcon>
            <DesktopIcon label={<>Trabajo -<br />Edge</>}><EdgeWork id="de" className="size-12" /></DesktopIcon>
            <DesktopIcon label="Firefox"><FirefoxIcon className="size-12" /></DesktopIcon>
            <DesktopIcon label="UiPath Studio"><UiStudio id="du" className="size-12" /></DesktopIcon>
            <DesktopIcon label={<>UiPath<br />Assistant</>}><UiAssistant className="size-12" /></DesktopIcon>
            <DesktopIcon label="documenta..." shortcut={false}><DocFolder className="size-12" /></DesktopIcon>
            <DesktopIcon label="Speccy"><SpeccyIcon className="size-12" /></DesktopIcon>
          </div>
          <div className="mr-5 mb-[31px] self-end">
            <DesktopIcon label={<>Papelera de<br />reciclaje</>} shortcut={false}><RecycleBin className="size-12" /></DesktopIcon>
          </div>
        </div>
        <AcmeDialog />
      </div>
      <div className={BAR}>
        <TaskButton label="Inicio"><StartIcon /></TaskButton>
        <div className="flex w-72 items-center border border-[#9fa6aa] bg-[#f2f2f2] pr-1">
          <Magnifier className="ml-3 size-4 text-black" />
          <input aria-label="Buscar" type="text" placeholder="Buscar" className="ml-3 w-0 flex-1 bg-transparent text-[13px] text-[#333] placeholder:text-[#333]" />
          <span className="flex h-8 w-[71px] items-center justify-center rounded-md bg-[#e2e2e2]"><Briefcase /></span>
        </div>
        <TaskButton label="Vista de tareas"><TaskViewIcon /></TaskButton>
        <PinnedApps id="r" />
        <Tray />
      </div>
    </section>
  );
}

export default function App() {
  return (
    <div className={"grid min-h-screen grid-cols-2 bg-white " + SEGOE}>
      <LeftScreen />
      <RightScreen />
    </div>
  );
}
